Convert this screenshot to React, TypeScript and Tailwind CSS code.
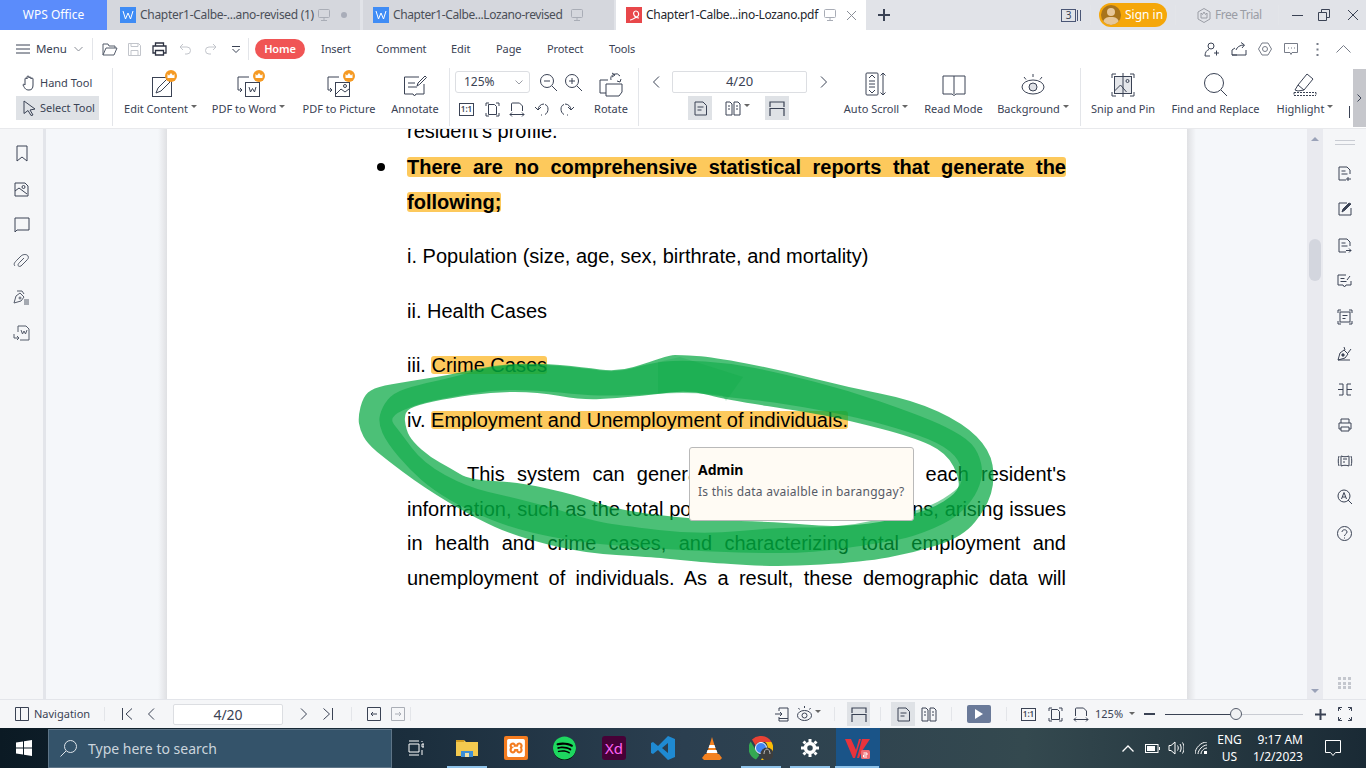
import type { ReactNode } from "react";
import { FaSpotify } from "react-icons/fa";
import { SiXampp } from "react-icons/si";

type Pt = [number, number];

// closed smooth path through midpoints
function smooth(p: Pt[]) {
  const mid = (a: Pt, b: Pt) => `${(a[0] + b[0]) / 2} ${(a[1] + b[1]) / 2}`;
  let d = `M${mid(p[p.length - 1], p[0])}`;
  p.forEach((c, i) => {
    d += ` Q${c[0]} ${c[1]} ${mid(c, p[(i + 1) % p.length])}`;
  });
  return d + "Z";
}

const lightOuter: Pt[] = [
  [358, 417], [363, 397], [373, 388], [397, 383], [450, 375], [493, 365], [537, 363], [583, 367], [617, 372], [650, 362], [670, 355], [680, 355], [713, 357], [780, 370], [847, 387], [913, 400], [963, 423], [990, 450], [995, 480], [987, 507], [963, 537], [913, 553], [863, 562], [780, 567], [713, 563], [680, 560], [650, 557], [583, 553], [517, 537], [473, 517], [423, 487], [383, 457], [367, 443], [360, 430],
];
const hole: Pt[] = [
  [404, 412], [417, 405], [450, 398], [493, 392], [537, 392], [583, 400], [617, 398], [650, 395], [690, 390], [727, 400], [807, 412], [847, 420], [913, 437], [947, 453], [960, 480], [957, 493], [930, 510], [880, 523], [830, 527], [780, 522], [700, 520], [617, 510], [577, 495], [517, 482], [470, 480], [450, 468], [430, 457], [413, 442], [406, 430],
];
const darkOuter: Pt[] = [
  [378, 423], [382, 407], [393, 393], [417, 385], [450, 378], [493, 366], [537, 364], [583, 368], [617, 373], [650, 363], [680, 360], [730, 363], [780, 373], [847, 390], [913, 413], [947, 427], [973, 443], [982, 463], [982, 480], [973, 500], [953, 520], [913, 537], [880, 543], [813, 553], [747, 553], [680, 550], [650, 548], [583, 543], [517, 530], [467, 510], [433, 490], [410, 470], [387, 443],
];
const darkInner: Pt[] = [
  [388, 417], [417, 404], [450, 397], [493, 390], [537, 390], [583, 395], [617, 396], [690, 392], [727, 397], [780, 403], [847, 415], [897, 428], [940, 443], [960, 460], [963, 480], [957, 490], [930, 507], [880, 520], [830, 528], [780, 527], [700, 535], [617, 525], [590, 520], [550, 507], [510, 497], [467, 487], [423, 463], [400, 432],
];

function Ic({ w, h, sw = 1, className, children }: { w: number; h: number; sw?: number; className?: string; children: ReactNode }) {
  return (
    <svg width={w} height={h} viewBox={`0 0 ${w} ${h}`} fill="none" stroke="currentColor" strokeWidth={sw} className={`shrink-0 ${className ?? ""}`}>
      {children}
    </svg>
  );
}

function Crown({ x, y }: { x: number; y: number }) {
  return (
    <g>
      <circle cx={x} cy={y} r={6} fill="#f59a23" stroke="none" />
      <path d={`M${x - 3.5} ${y - 2}l1.5 1.5 2-2.5 2 2.5 1.5-1.5v4h-7z`} fill="#fff" stroke="none" />
    </g>
  );
}

function Monitor() {
  return (
    <Ic w={12} h={12} className="text-[#a9adb6]">
      <rect x={0.5} y={0.5} width={11} height={8} rx={1} />
      <path d="M6 8.5v3M3 11.5h6" />
    </Ic>
  );
}

function WordIcon() {
  return (
    <span className="flex h-4 w-4 shrink-0 items-center justify-center bg-[#3f8cf5]">
      <Ic w={12} h={10} className="text-white">
        <path d="M1 1l2.5 8L6 3l2.5 6L11 1" />
      </Ic>
    </span>
  );
}

function Caret() {
  return <span className="ml-[3px] mb-[5px] inline-block h-0 w-0 border-x-[3px] border-t-[3px] border-x-transparent border-t-[#666]" />;
}

function Sep({ h = "h-[22px]", ml = "" }: { h?: string; ml?: string }) {
  return <span className={`w-px shrink-0 bg-[#e3e5e9] ${h} ${ml}`} />;
}

function RibbonBtn({ w, label, caret, children }: { w: string; label: string; caret?: boolean; children: ReactNode }) {
  return (
    <div className={`flex shrink-0 flex-col items-center ${w}`}>
      <div className="flex h-[26px] items-end">{children}</div>
      <div className="mt-[3px] flex h-[18px] items-center whitespace-nowrap">
        {label}
        {caret && <Caret />}
      </div>
    </div>
  );
}

function FitPage() {
  return (
    <Ic w={15} h={15}>
      <path d="M1 4V1h3M11 1h3v3M14 11v3h-3M4 14H1v-3" />
      <path d="M3.5 2.5h6l2 2v8h-8z" />
    </Ic>
  );
}

function FitWidth() {
  return (
    <Ic w={16} h={15}>
      <path d="M2.5 9V2a1 1 0 011-1h7l3 3v5" />
      <path d="M1 12.5h14M3 10.5l-2 2 2 2M13 10.5l2 2-2 2" />
    </Ic>
  );
}

function OneToOne() {
  return (
    <span className="flex h-[13px] w-[15px] shrink-0 items-center justify-center border border-[#3a4254] text-[8px] leading-none font-semibold">1:1</span>
  );
}

function DocBtn() {
  return (
    <Ic w={13} h={15}>
      <path d="M1 1h8l3.5 3.5V14H1zM3.5 6h6M3.5 9h4" />
    </Ic>
  );
}

function TwoPages() {
  return (
    <Ic w={16} h={15}>
      <path d="M1 1h4l2 2v11H1zM9 1h4l2 2v11H9zM3 5h2M3 8h2M11 5h2M11 8h2" />
    </Ic>
  );
}

function FitH() {
  return (
    <Ic w={16} h={15} sw={1.2}>
      <path d="M1 6V1h14v5M1 15V7.500h14V15" />
    </Ic>
  );
}

function Eye() {
  return (
    <>
      <ellipse cx={12} cy={14} rx={11} ry={7} />
      <circle cx={12} cy={14} r={4} fill="#dfe1e6" />
      <path d="M12 1v3M3 4l2 2.5M21 4l-2 2.5" />
    </>
  );
}

const sideLeft = [
  <Ic w={12} h={17} key="a"><path d="M1 1h10v15l-5-4-5 4z" /></Ic>,
  <Ic w={15} h={15} key="b"><path d="M1 1h10l3 3v10H1zM1 9l4-3 8 6" /><circle cx={9.5} cy={5} r={1.5} /></Ic>,
  <Ic w={16} h={16} key="c"><path d="M1 1h14v12H3l-2 2z" /></Ic>,
  <Ic w={17} h={15} key="d" className="text-[#555c6b]"><path d="M2 12c-2-2 0-4 2-6l4-4c2-2 6-2 7 0s0 3-2 5l-5 5c-2 1-3 0-3-1s1-2 2-3l4-4" /></Ic>,
  <Ic w={17} h={15} key="e" className="text-[#555c6b]"><path d="M1 13l2-7 4-3 4 4-3 4zM4 1l5 0 2 3M11 10h5M11 12h5M11 14h5" /><circle cx={7} cy={8} r={1} /></Ic>,
  <Ic w={17} h={16} key="f" className="text-[#555c6b]"><path d="M5 7V1h8l3 3v11H7M1 9v4h5M4 11l2 2-2 2M8 5l1.5 4L11 6l1.5 3L14 5" /></Ic>,
];

const sideRight = [
  <Ic w={14} h={15} key="a"><path d="M1 1h8l3 3v4M8 14H1V1M3.5 5h4M3.5 8h6M10 11v4M8 13h5" /></Ic>,
  <Ic w={14} h={14} key="b"><path d="M9 1H1v12h12V6" /><path d="M4 10l1-3 6-6 2 1-6 6z" fill="currentColor" /></Ic>,
  <Ic w={14} h={15} key="c"><path d="M1 1h8l3 3v4M8 14H1V1M3.5 5h4M3.5 8h6M8 12.5h5M11 10.5l2 2-2 2" /></Ic>,
  <Ic w={15} h={14} key="d"><path d="M9 1H1v10h5l1.5 2L9 11h5V7M3.5 4.5h4M3.5 7.5h6M10 6l3-4" /></Ic>,
  <Ic w={16} h={16} key="e"><path d="M1 4V1h3M12 1h3v3M15 12v3h-3M4 15H1v-3" /><rect x={3} y={3} width={10} height={10} /><path d="M5.5 6.5h5M5.5 9.5h3" /></Ic>,
  <Ic w={15} h={15} key="f"><path d="M1 14l2-7 4-3 4 4-3 4zM1 14h12M7 1l1 3M14 3l-3 4" /><circle cx={6} cy={9} r={1.2} fill="currentColor" /></Ic>,
  <Ic w={14} h={13} key="g"><path d="M1 1h4v11H1M13 1H9v11h4M0 6.5h5M9 6.5h5" /></Ic>,
  <Ic w={14} h={14} key="h"><path d="M3 5V1h8v4M3 11H1V5h12v6h-2M3 9h8v4H3z" /></Ic>,
  <Ic w={16} h={14} key="i"><path d="M4 2c3 1 5 1 8 0v10c-3-1-5-1-8 0zM6 5h4M6 8h2M2 2c-1 3-1 7 0 10M14 2c1 3 1 7 0 10" /></Ic>,
  <Ic w={16} h={16} key="j"><circle cx={7} cy={7} r={6} /><path d="M4.5 10L7 3.5 9.5 10M5.5 8h3M11 11l4 4" /></Ic>,
  <Ic w={15} h={15} key="k"><circle cx={7.5} cy={7.5} r={7} /><path d="M5 6c0-3 5-3 5 0 0 2-2.5 2-2.5 4M7.5 11.5v1" /></Ic>,
];

function JLine({ children, className = "" }: { children: ReactNode; className?: string }) {
  return <div className={`[text-align-last:justify] ${className}`}>{children}</div>;
}

function Mark({ children }: { children: ReactNode }) {
  return <span className="inline-block h-[18px] rounded-[3px] bg-[#fdc95c] leading-[18px]">{children}</span>;
}

export default function App() {
  return (
    <div className="relative flex h-[768px] w-[1366px] flex-col overflow-hidden bg-white font-['Noto_Sans',sans-serif] text-[11px] text-[#3a4254]">
      {/* title bar */}
      <div className="flex h-[30px] shrink-0 items-center bg-[#e1e3e8] text-[12px]">
        <div className="flex h-full w-[107px] items-center justify-center bg-[#5b8cfb] text-white">WPS Office</div>
        <div className="flex h-full w-[253px] items-center bg-[#d5d7dd] pl-[13px]">
          <WordIcon />
          <span className="ml-[4px] w-[178px] tracking-[-0.3px] whitespace-nowrap text-[#4b4f58]">Chapter1-Calbe-...ano-revised (1)</span>
          <Monitor />
          <span className="ml-[11px] h-[6px] w-[6px] rounded-full bg-[#a9adb9]" />
        </div>
        <div className="ml-[3px] flex h-full w-[251px] items-center bg-[#d5d7dd] pl-[10px]">
          <WordIcon />
          <span className="ml-[4px] w-[178px] tracking-[-0.4px] whitespace-nowrap text-[#4b4f58]">Chapter1-Calbe...Lozano-revised</span>
          <Monitor />
        </div>
        <div className="ml-[2px] flex h-full w-[250px] items-center bg-white pl-[10px]">
          <span className="flex h-4 w-4 shrink-0 items-center justify-center bg-[#e8474a]">
            <Ic w={12} h={12} sw={1.2} className="text-white"><path d="M2 11c1 0 5-2 8-4 1-1 1-5-2-5-2 0-3 2-2 4 1 2 3 3 5 3" /></Ic>
          </span>
          <span className="ml-[4px] w-[178px] tracking-[-0.3px] whitespace-nowrap text-[#23262d]">Chapter1-Calbe...ino-Lozano.pdf</span>
          <Monitor />
          <Ic w={11} h={11} className="ml-[10px] text-[#8a8e97]"><path d="M1 1l9 9M10 1l-9 9" /></Ic>
        </div>
        <Ic w={12} h={12} sw={2} className="ml-[12px]"><path d="M6 0v12M0 6h12" /></Ic>
        <div className="ml-[171px] flex h-[14px] w-[21px] items-center border-0 text-[10px]">
          <span className="flex h-[13px] w-[15px] items-center justify-center border border-[#4a5675]">3</span>
          <span className="ml-[1px] h-[11px] w-[4px] border-x border-[#4a5675]" />
        </div>
        <Sep h="h-[20px]" ml="ml-[8px]" />
        <div className="ml-[8px] flex h-[24px] w-[68px] items-center rounded-full bg-[#f5a70a] pl-[2px] text-white">
          <span className="relative h-[20px] w-[20px] overflow-hidden rounded-full bg-[#a8741c]">
            <span className="absolute top-[3px] left-[6px] h-[8px] w-[8px] rounded-full bg-[#e6c79a]" />
            <span className="absolute top-[12px] left-[2px] h-[12px] w-[16px] rounded-full bg-[#e6c79a]" />
          </span>
          <span className="ml-[4px]">Sign in</span>
        </div>
        <Sep h="h-[20px]" ml="ml-[8px]" />
        <Ic w={14} h={15} className="ml-[21px] text-[#9a9da5]"><path d="M7 .5l6 3.5v7l-6 3.5L1 11V4zM4 5l1.5 1.5L7 4l1.5 2.5L10 5v5H4z" /></Ic>
        <span className="ml-[4px] w-[46px] tracking-[-0.5px] whitespace-nowrap text-[#9a9da5]">Free Trial</span>
        <Sep h="h-[20px]" ml="ml-[17px]" />
        <Ic w={12} h={12} className="ml-[12px]"><path d="M1 6.5h11" /></Ic>
        <Ic w={12} h={12} className="ml-[15px]"><path d="M.5 3.5h8v8h-8zM3.5 3V.5h8v8H9" /></Ic>
        <Ic w={12} h={12} className="ml-[17px]"><path d="M1 1l10 10M11 1L1 11" /></Ic>
      </div>

      {/* menu row */}
      <div className="flex h-[35px] shrink-0 items-center bg-white pt-[3px] text-[11px] tracking-[-0.1px]">
        <Ic w={14} h={10} className="ml-[16px]"><path d="M0 1h14M0 5h14M0 9h14" /></Ic>
        <span className="ml-[6px] w-[32px] text-[11.5px]">Menu</span>
        <Ic w={9} h={6} className="ml-[6px] text-[#8a8e97]"><path d="M.5 1L4.5 5l4-4" /></Ic>
        <Sep ml="ml-[9px]" />
        <Ic w={16} h={13} className="ml-[9px] text-[#555c6b]"><path d="M1 12V1h5l1 2h6v2M1 12l3-7h11l-3 7z" /></Ic>
        <Ic w={13} h={13} className="ml-[10px] text-[#c2c5cb]"><path d="M.5.5h10l2 2v10H.5zM3 .5v3h7v-3M3 12.5v-5h7v5" /></Ic>
        <Ic w={15} h={14} sw={1.3} className="ml-[11px] text-[#2c3140]"><path d="M3.5 4V1h8v3M3.5 11H1V4h13v7h-2.500M3.500 8.500h8V13h-8z" /></Ic>
        <Ic w={12} h={12} className="ml-[12px] text-[#c2c5cb]"><path d="M4 1L1 4l3 3M1 4h7a3.500 3.500 0 010 7H6" /></Ic>
        <Ic w={12} h={12} className="ml-[14px] text-[#c2c5cb]"><path d="M8 1l3 3-3 3M11 4H4a3.500 3.500 0 000 7h2" /></Ic>
        <Ic w={8} h={7} className="ml-[15px]"><path d="M0 .5h8M.5 3l3.500 3.500L7.500 3" /></Ic>
        <Sep ml="ml-[8px]" />
        <span className="ml-[6px] flex h-[20px] w-[50px] items-center justify-center rounded-full bg-[#f05555] font-semibold text-white">Home</span>
        <span className="ml-[16px] w-[55px]">Insert</span>
        <span className="w-[75px]">Comment</span>
        <span className="w-[45px]">Edit</span>
        <span className="w-[51px]">Page</span>
        <span className="w-[62px]">Protect</span>
        <span className="w-[40px]">Tools</span>
        <div className="ml-auto flex items-center pr-[15px]">
          <Ic w={15} h={15}><circle cx={7} cy={4} r={3} /><path d="M1 14c0-4 2-6 4-6.500M6 14H1M10 11h5M12.500 8.500v5" /></Ic>
          <Ic w={16} h={14} className="ml-[12px]"><path d="M1 13V8l3-2M6 13H1h14V8M5 8c1-3 4-5 8-5M10 .5L13.500 3 11 6" /></Ic>
          <Ic w={14} h={14} className="ml-[11px] text-[#777c88]"><path d="M4 1h6l3.500 6-3.500 6H4L.5 7z" /><circle cx={7} cy={7} r={2.500} /></Ic>
          <Ic w={14} h={12} className="ml-[12px] text-[#777c88]"><path d="M.5.5h13v9H8L7 11.500 6 9.500H.5zM4 5h1M7 5h1M10 5h1" /></Ic>
          <Ic w={3} h={13} sw={2} className="ml-[18px] text-[#777c88]"><path d="M1.500 0v2M1.500 5.500v2M1.500 11v2" /></Ic>
          <Ic w={15} h={8} className="ml-[17px] text-[#777c88]"><path d="M.5 7.500L7.500 .5l7 7" /></Ic>
        </div>
      </div>

      {/* ribbon */}
      <div className="relative flex h-[64px] shrink-0 items-start overflow-hidden border-b border-[#e8e9ec] bg-white pt-[6px] text-[11px]">
        <div className="ml-[16px] flex w-[83px] shrink-0 flex-col gap-[1px]">
          <div className="flex h-[24px] items-center pl-[6px]">
            <Ic w={14} h={16}><path d="M3 9V4a1 1 0 012 0V2a1 1 0 012 0v1a1 1 0 012 0v1a1 1 0 012 0v6c0 3-1 5-4 5s-4-1-6-5c0-1 1-1 2 0z" /></Ic>
            <span className="ml-[4px]">Hand Tool</span>
          </div>
          <div className="flex h-[24px] items-center bg-[#dfe2e6] pl-[7px]">
            <Ic w={13} h={16}><path d="M1 1l11 8-5 1 3 5-2 .5-3-5-4 3z" /></Ic>
            <span className="ml-[4px]">Select Tool</span>
          </div>
        </div>
        <Sep h="-mt-[3px] h-[58px]" ml="ml-[13px]" />
        <div className="ml-[4px] flex">
          <RibbonBtn w="w-[87px]" label="Edit Content" caret>
            <Ic w={28} h={28} className="ml-[4px]">
              <rect x={3.500} y={8.500} width={19} height={19} />
              <path d="M7 24l2-5 9-9 3 3-9 9z" />
              <Crown x={22} y={7} />
            </Ic>
          </RibbonBtn>
          <RibbonBtn w="w-[89px]" label="PDF to Word" caret>
            <Ic w={28} h={28} className="ml-[4px]">
              <path d="M12 8H1v13h4M3 19l2 2-2 2" />
              <rect x={8.500} y={13.500} width={14} height={14} />
              <path d="M12 18l1.500 5 2-3.500 2 3.500 1.500-5" />
              <Crown x={22} y={7} />
            </Ic>
          </RibbonBtn>
          <RibbonBtn w="w-[92px]" label="PDF to Picture">
            <Ic w={28} h={28} className="ml-[4px]">
              <path d="M12 8H1v13h4M3 19l2 2-2 2" />
              <rect x={8.500} y={13.500} width={14} height={14} />
              <path d="M9 25l5-5 4 3 4-3" />
              <circle cx={18} cy={17} r={1.500} />
              <Crown x={22} y={7} />
            </Ic>
          </RibbonBtn>
          <RibbonBtn w="w-[60px]" label="Annotate">
            <Ic w={24} h={24}>
              <path d="M16 4H1.500v17H10l1.500 2 1.500-2h8V11M5 10h7M5 14h9" />
              <path d="M14 13l1-3 7-7 1.500 1.500-7 7z" />
            </Ic>
          </RibbonBtn>
        </div>
        <Sep h="-mt-[3px] h-[58px]" ml="ml-[4px]" />
        <div className="ml-[5px] flex w-[136px] shrink-0 flex-col gap-[4px]">
          <div className="flex h-[22px] items-center">
            <div className="flex h-[22px] w-[75px] items-center justify-between rounded-[3px] border border-[#dcdee2] pr-[6px] pl-[8px] text-[12px]">
              125%
              <Ic w={8} h={5} className="text-[#9a9da5]"><path d="M.5.5L4 4 7.500.5" /></Ic>
            </div>
            <Ic w={17} h={17} className="ml-[10px]"><circle cx={7} cy={7} r={6.500} /><path d="M4 7h6M12 12l5 5" /></Ic>
            <Ic w={17} h={17} className="ml-[8px]"><circle cx={7} cy={7} r={6.500} /><path d="M4 7h6M7 4v6M12 12l5 5" /></Ic>
          </div>
          <div className="flex h-[24px] items-center pl-[4px]">
            <OneToOne />
            <span className="ml-[11px]"><FitPage /></span>
            <span className="ml-[9px]"><FitWidth /></span>
            <Ic w={16} h={14} className="ml-[9px]"><path d="M4 8a6 6 0 016-6M1 5l3 3 3-3M11 2.500c4 1 4 8 0 10M8 13H7" /></Ic>
            <Ic w={16} h={14} className="ml-[9px]"><path d="M12 8a6 6 0 00-6-6M15 5l-3 3-3-3M5 2.500c-4 1-4 8 0 10M8 13h1" /></Ic>
          </div>
        </div>
        <RibbonBtn w="w-[40px]" label="Rotate">
          <Ic w={24} h={25}>
            <path d="M9 8H1v13h6M7 12h16v8l-3 4H7z" />
            <path d="M12 8a5 5 0 019-4M22 7l-1 3-3-1M13 1l3 2-3 2" />
          </Ic>
        </RibbonBtn>
        <Sep h="-mt-[3px] h-[58px]" ml="ml-[7px]" />
        <div className="flex w-[199px] shrink-0 flex-col gap-[1px]">
          <div className="flex h-[24px] items-center pb-[2px]">
            <Ic w={8} h={12} className="ml-[13px]"><path d="M7 .5L1.500 6 7 11.500" /></Ic>
            <div className="ml-[12px] flex h-[22px] w-[135px] items-center justify-center rounded-[2px] border border-[#dcdee2] text-[13px]">4/20</div>
            <Ic w={8} h={12} className="ml-[13px]"><path d="M1 .5L6.500 6 1 11.500" /></Ic>
          </div>
          <div className="flex h-[24px] items-center pl-[49px]">
            <span className="flex h-[24px] w-[24px] items-center justify-center bg-[#dfe2e6]"><DocBtn /></span>
            <span className="ml-[13px] flex w-[27px] items-center"><TwoPages /><Caret /></span>
            <span className="ml-[13px] flex h-[24px] w-[24px] items-center justify-center bg-[#dfe2e6]"><FitH /></span>
          </div>
        </div>
        <RibbonBtn w="w-[76px]" label="Auto Scroll" caret>
          <Ic w={22} h={25}>
            <rect x={1} y={1} width={12} height={22} rx={1} />
            <path d="M4 6l3-3 3 3M4 18l3 3 3-3M4 9h6M4 12h6M4 15h6M18 1v22M15.500 3.500L18 1l2.500 2.500M15.500 20.500L18 23l2.500-2.500" />
          </Ic>
        </RibbonBtn>
        <RibbonBtn w="w-[79px]" label="Read Mode">
          <Ic w={24} h={24}><path d="M1 3h22v18H14l-2 1.500L10 21H1zM12 3v18" /></Ic>
        </RibbonBtn>
        <RibbonBtn w="w-[80px]" label="Background" caret>
          <Ic w={24} h={24}><Eye /></Ic>
        </RibbonBtn>
        <Sep h="-mt-[3px] h-[58px]" ml="ml-[7px]" />
        <div className="ml-[4px] flex">
          <RibbonBtn w="w-[76px]" label="Snip and Pin">
            <Ic w={24} h={24}>
              <path d="M1 5V1h4M19 1h4v4M23 19v4h-4M5 23H1v-4" />
              <rect x={3.500} y={3.500} width={17} height={17} fill="#e4e6ea" />
              <path d="M3.500 18l6-6 6 7M15 8a1.500 1.500 0 103 0 1.500 1.500 0 00-3 0M12 0v24" />
            </Ic>
          </RibbonBtn>
          <RibbonBtn w="w-[109px]" label="Find and Replace">
            <Ic w={24} h={24}><circle cx={10} cy={10} r={9.500} /><path d="M17 17l6 6" /></Ic>
          </RibbonBtn>
          <RibbonBtn w="w-[70px]" label="Highlight" caret>
            <Ic w={24} h={24}>
              <path d="M2 17l3-5 9-11 6 5-9 11-6 1zM5 12l6 5" />
              <path d="M1 22.500h22M1 19.500h22M23 19.500v3M1 19.500v3" strokeDasharray="2 1" />
            </Ic>
          </RibbonBtn>
        </div>
        <span className="ml-[9px] mt-[35px] h-[12px] w-[1px] bg-[#3a4254]" />
        <div className="absolute top-[4px] right-0 flex h-[58px] w-[13px] items-center justify-center bg-[#c6c7cc]">
          <Ic w={5} h={8}><path d="M.5.5L4 4 .5 7.500" /></Ic>
        </div>
      </div>

      {/* main */}
      <div className="flex min-h-0 flex-1">
        <div className="flex w-[43px] shrink-0 flex-col items-center bg-[#f5f6f8] pt-[6px]">
          {sideLeft.map((icon, i) => (
            <div key={i} className="flex h-[36px] items-center">{icon}</div>
          ))}
        </div>
        <div className="w-[3px] shrink-0 bg-[#e3e5ea]" />
        <div className="w-[121px] shrink-0 bg-[linear-gradient(to_right,#f5f7fa_112px,#dfe0e3)]" />
        <div className="w-[1020px] shrink-0 overflow-hidden bg-white pl-[240px] font-['Liberation_Sans',Arial,sans-serif] text-[20px] leading-[34.6px] text-black">
          <div className="-mt-[15px] w-[659px]">
            <div className="mb-[1px]">resident's profile.</div>
            <div className="mb-[1px] flex">
              <span className="-ml-[30px] flex w-[30px] pt-[13px]"><span className="h-[8px] w-[8px] rounded-full bg-black" /></span>
              <JLine className="my-[7px] h-[20px] w-[660px] rounded-[3px] bg-[#fdc95c] leading-[20px] font-bold">There are no comprehensive statistical reports that generate the</JLine>
            </div>
            <div className="mb-[20px] font-bold">
              <span className="inline-block h-[20px] rounded-[3px] bg-[#fdc95c] leading-[20px]">following;</span>
            </div>
            <div className="mb-[20px]">i. Population (size, age, sex, birthrate, and mortality)</div>
            <div className="mb-[20px]">ii. Health Cases</div>
            <div className="mb-[20px]">iii. <Mark>Crime Cases</Mark></div>
            <div className="mb-[19.500px]">iv. <Mark>Employment and Unemployment of individuals.</Mark></div>
            <JLine className="indent-[60px]">This system can generate statistical reports of each resident's</JLine>
            <JLine>information, such as the total population of resident citizens, arising issues</JLine>
            <JLine>in health and crime cases, and characterizing total employment and</JLine>
            <JLine>unemployment of individuals. As a result, these demographic data will</JLine>
          </div>
        </div>
        <div className="w-[120px] shrink-0 bg-[linear-gradient(to_right,#dfe0e3,#f5f7fa_9px)]" />
        <div className="flex w-[16px] shrink-0 flex-col items-center bg-[#e9eaef]">
          <span className="mt-[8px] h-0 w-0 border-x-[4px] border-b-[4px] border-x-transparent border-b-[#9aa2b8]" />
          <span className="mt-[98px] h-[42px] w-[12px] rounded-full bg-[#d3d6de]" />
          <span className="mt-auto mb-[6px] h-0 w-0 border-x-[4px] border-t-[4px] border-x-transparent border-t-[#9aa2b8]" />
        </div>
        <div className="flex w-[43px] shrink-0 flex-col items-center bg-[#f5f6f8]">
          <div className="mt-[11px] mb-[10px] h-[5px] w-[20px] border-y border-[#c9ccd3]" />
          {sideRight.map((icon, i) => (
            <div key={i} className="flex h-[36px] items-center">{icon}</div>
          ))}
          <div className="mt-auto mb-[10px] grid w-[13px] grid-cols-3 gap-[1.500px]">
            {Array.from({ length: 9 }).map((_, i) => (
              <span key={i} className="h-[3px] w-[3px] bg-[#c4c7ce]" />
            ))}
          </div>
        </div>
      </div>

      {/* status bar */}
      <div className="flex h-[29px] shrink-0 items-center border-t border-[#e3e5ea] bg-[#f5f6f8] text-[11px]">
        <Ic w={14} h={14} className="ml-[15px]"><path d="M.5.5h13v13H.5zM5.500.5v13" /></Ic>
        <span className="ml-[5px] w-[56px] whitespace-nowrap">Navigation</span>
        <Sep h="h-[14px]" ml="ml-[14px]" />
        <Ic w={11} h={12} className="ml-[17px]"><path d="M.5 0v12M10 .5L4 6l6 5.500" /></Ic>
        <Ic w={8} h={12} className="ml-[14px]"><path d="M7 .5L1.500 6 7 11.500" /></Ic>
        <div className="ml-[18px] flex h-[21px] w-[110px] items-center justify-center rounded-[2px] border border-[#dcdee2] bg-white text-[14px]">4/20</div>
        <Ic w={8} h={12} className="ml-[17px]"><path d="M1 .5L6.500 6 1 11.500" /></Ic>
        <Ic w={10} h={12} className="ml-[15px]"><path d="M9.500 0v12M.5 .5L6.500 6l-6 5.500" /></Ic>
        <Sep h="h-[14px]" ml="ml-[18px]" />
        <Ic w={14} h={14} className="ml-[15px]"><path d="M.5.5h13v13H.5zM10 7H4M6 5L4 7l2 2" /></Ic>
        <Ic w={14} h={14} className="ml-[10px] text-[#aaaeb6]"><path d="M.5.5h13v13H.5zM4 7h6M8 5l2 2-2 2" /></Ic>
        <Sep h="h-[14px]" ml="ml-[5px]" />
        <Ic w={14} h={15} className="ml-[364px]"><path d="M4 4V1h9v13H4v-4M0 7h7M5 5l2 2-2 2M4 11.500h9" /></Ic>
        <Ic w={15} h={16} className="ml-[8px]">
          <ellipse cx={7.500} cy={9.500} rx={7} ry={5} />
          <circle cx={7.500} cy={9.500} r={2.500} />
          <path d="M7.500 0v2M1.500 2l1 1.500M13.500 2l-1 1.500" />
        </Ic>
        <Caret />
        <Sep h="h-[14px]" ml="ml-[13px]" />
        <span className="ml-[12px] flex h-[24px] w-[23px] items-center justify-center bg-[#dfe2e6]"><FitH /></span>
        <Sep h="h-[14px]" ml="ml-[10px]" />
        <span className="ml-[10px] flex h-[24px] w-[24px] items-center justify-center bg-[#dfe2e6]"><DocBtn /></span>
        <span className="ml-[6px]"><TwoPages /></span>
        <Sep h="h-[14px]" ml="ml-[14px]" />
        <span className="ml-[15px] flex h-[18px] w-[24px] items-center justify-center rounded-[2px] bg-[#6a7a99]">
          <span className="h-0 w-0 border-y-[5px] border-l-[8px] border-y-transparent border-l-white" />
        </span>
        <Sep h="h-[14px]" ml="ml-[15px]" />
        <span className="ml-[14px]"><OneToOne /></span>
        <span className="ml-[12px]"><FitPage /></span>
        <span className="ml-[10px]"><FitWidth /></span>
        <span className="ml-[6px] w-[27px] text-[11px]">125%</span>
        <span className="ml-[4px] mt-[4px]"><Caret /></span>
        <span className="ml-[9px] h-[2px] w-[11px] bg-[#3a4254]" />
        <div className="relative ml-[10px] h-[1px] w-[138px] bg-[#c9ccd3]">
          <div className="h-px w-[71px] bg-[#3a4254]" />
          <span className="absolute -top-[6px] left-[65px] h-[12px] w-[12px] rounded-full border border-[#555c6b] bg-[#f0f1f3]" />
        </div>
        <Ic w={11} h={11} sw={2} className="ml-[12px]"><path d="M5.500 0v11M0 5.500h11" /></Ic>
        <Ic w={14} h={14} className="ml-[12px]"><path d="M.5 4V.5H4M10 .5h3.500V4M13.500 10v3.500H10M4 13.500H.5V10M.5.5L3 3M13.500.5L11 3M13.500 13.500L11 11M.5 13.500L3 11" /></Ic>
      </div>

      {/* taskbar */}
      <div className="flex h-[40px] shrink-0 items-center bg-[linear-gradient(to_right,#0b1a24,#1b2e3d_30%,#2b3f50_50%,#34494f_75%,#1a2a35)] text-[12px] text-white">
        <Ic w={16} h={16} className="ml-[16px]">
          <path d="M0 2.500l7-1v6H0zM8 1.300l8-1.300v7.500H8zM0 8.500h7v6l-7-1zM8 8.500h8V16l-8-1.300z" fill="#fff" stroke="none" />
        </Ic>
        <div className="ml-[16px] flex h-[39px] w-[344px] items-center border border-[#5d7487] bg-[#34536a] pl-[11px] text-[14px] text-[#cbd5dd]">
          <Ic w={17} h={17} className="text-[#dfe5ea]"><circle cx={10.500} cy={6.500} r={6} /><path d="M6 11l-5.500 5.500" /></Ic>
          <span className="ml-[11px]">Type here to search</span>
        </div>
        <Ic w={16} h={16} className="ml-[16px]"><path d="M1 1h10M1 15h10M1 4h10v8H1zM14 1v1M14 4h2v3h-2zM14 10v5" /></Ic>
        <Ic w={22} h={18} className="ml-[32px]">
          <path d="M0 3V1h8l2 2h12v14H0z" fill="#f3c94f" stroke="none" />
          <path d="M0 3h8V1H0z" fill="#d39e22" stroke="none" />
          <path d="M5 12h12v6H5z" fill="#3d8fd8" stroke="none" />
          <path d="M9 14h4v4H9z" fill="#f3e3ac" stroke="none" />
        </Ic>
        <span className="ml-[26px] flex h-[24px] w-[24px] items-center justify-center rounded-[2px] bg-[#f47c20] text-white">
          <SiXampp size={18} />
        </span>
        <span className="ml-[25px] flex h-[23px] w-[23px] items-center justify-center rounded-full bg-black text-[#1ed760]">
          <FaSpotify size={24} />
        </span>
        <span className="ml-[26px] flex h-[24px] w-[24px] items-center justify-center rounded-[3px] bg-[#470137] text-[15px] text-[#ff61f6]">Xd</span>
        <Ic w={24} h={24} className="ml-[25px]">
          <path d="M17 0l7 3v18l-7 3-10-10-5 4-2-1V7l2-1 5 4zM17 7l-6 5 6 5z" fill="#1f8ad2" stroke="none" fillRule="evenodd" />
        </Ic>
        <Ic w={20} h={23} className="ml-[27px]">
          <path d="M10 0l3 10 3 8H4l3-8z" fill="#f58220" stroke="none" />
          <path d="M7.500 8h5l1 3h-7zM5.500 13h9l1 3H4.500z" fill="#fff" stroke="none" />
          <path d="M3 17h14l3 4-2 2H2l-2-2z" fill="#f58220" stroke="none" />
        </Ic>
        <Ic w={24} h={24} className="ml-[27px]">
          <path d="M12 0a12 12 0 0110.500 6H12a6 6 0 00-5.500 3.500L3 3.500A12 12 0 0112 0z" fill="#e94235" stroke="none" />
          <path d="M1.700 5.500l5 8.500 3.500 5.500L7 23.500A12 12 0 011.700 5.500z" fill="#34a853" stroke="none" />
          <path d="M22.500 6a12 12 0 01-10.500 18l5-9a6 6 0 00-1-9z" fill="#fbbc05" stroke="none" />
          <circle cx={12} cy={12} r={5.500} fill="#4285f4" stroke="#fff" />
          <circle cx={18} cy={18} r={6.500} fill="#3d3d3d" stroke="none" />
          <path d="M15 18a3 5 0 016 0" stroke="#bbb" />
        </Ic>
        <Ic w={18} h={18} sw={3.500} className="ml-[28px] text-white">
          <circle cx={9} cy={9} r={4.500} />
          <path d="M9 0v3M9 15v3M0 9h3M15 9h3M2.500 2.500l2 2M13.500 13.500l2 2M2.500 15.500l2-2M13.500 4.500l2-2" strokeWidth={3} />
        </Ic>
        <span className="relative ml-[17px] flex h-[40px] w-[44px] items-center justify-center bg-[#1a5488]">
          <Ic w={26} h={24}>
            <path d="M0 3h6l5 11 3-11h2L10 22H8z" fill="#e8333c" stroke="none" />
            <path d="M17 3h8l-8 12-3 7h-2z" fill="#e8333c" stroke="none" />
            <rect x={16} y={14} width={9} height={9} rx={1.500} fill="#ee6d73" stroke="none" />
            <path d="M18.500 17h3.500v2h-3.500v2H22" stroke="#fff" />
          </Ic>
        </span>
        <div className="ml-auto flex items-center">
          <Ic w={12} h={7}><path d="M.5 6.500L6 1l5.500 5.500" strokeWidth={1.300} /></Ic>
          <Ic w={15} h={9} className="ml-[11px]"><rect x={0.5} y={0.5} width={12.500} height={8} /><rect x={2} y={2} width={8} height={5} fill="#fff" stroke="none" /><path d="M14.500 3v3" /></Ic>
          <Ic w={16} h={14} className="ml-[8px]"><path d="M1 4.500h2L7 1v12L3 9.500H1zM9.500 4.500c1 1.500 1 3.500 0 5M12 3c1.500 2.500 1.500 5.500 0 8M14.500 1.500c2 3.500 2 7.500 0 11" /></Ic>
          <Ic w={12} h={12} className="ml-[11px]"><path d="M0 12C0 6 6 0 12 0M3 12c0-4 5-9 9-9M6 12c0-3 3-6 6-6" /><rect x={9} y={9} width={3} height={3} fill="#fff" stroke="none" /></Ic>
          <div className="ml-[11px] flex w-[23px] flex-col items-center leading-[17px]">
            <span>ENG</span>
            <span>US</span>
          </div>
          <div className="ml-[16px] flex w-[46px] flex-col items-end leading-[17px] whitespace-nowrap">
            <span>9:17 AM</span>
            <span>1/2/2023</span>
          </div>
          <Ic w={16} h={16} className="mr-[25px] ml-[22px]"><path d="M.5.5h15v12h-5L8 15.500 5.500 12.500H.5z" /></Ic>
        </div>
      </div>

      {/* underlines of running apps */}
      <div className="absolute top-[766px] left-0 flex h-[2px] w-full">
        <span className="ml-[447px] w-[40px] bg-[#8fc3ea]" />
        <span className="ml-[254px] w-[40px] bg-[#8fc3ea]" />
        <span className="ml-[9px] w-[40px] bg-[#8fc3ea]" />
        <span className="ml-[5px] w-[44px] bg-[#8fc3ea]" />
      </div>

      {/* pen stroke drawn over the page */}
      <svg width={1366} height={768} viewBox="0 0 1366 768" className="pointer-events-none absolute top-0 left-0">
        <path d={smooth(lightOuter) + smooth(hole)} fill="#00a53d" fillOpacity={0.7} fillRule="evenodd" />
        <path d={smooth(darkOuter) + smooth(darkInner)} fill="#00a53d" fillOpacity={0.5} fillRule="evenodd" />
        <path d="M658 362L680 357 743 377 726 401 722 395 690 391 658 393Z" fill="#00a53d" fillOpacity={0.2} />
      </svg>

      {/* comment tooltip */}
      <div className="absolute top-[447px] left-[689px] flex h-[74px] w-[225px] flex-col rounded-[3px] border border-[#b9b9b9] bg-[#fffbf4] pt-[12px] pl-[8px]">
        <div className="text-[14px] leading-[20px] font-bold text-black">Admin</div>
        <div className="mt-[4px] text-[12px] leading-[16px] tracking-[0.25px] whitespace-nowrap text-[#555a66]">Is this data avaialble in baranggay?</div>
      </div>
    </div>
  );
}
